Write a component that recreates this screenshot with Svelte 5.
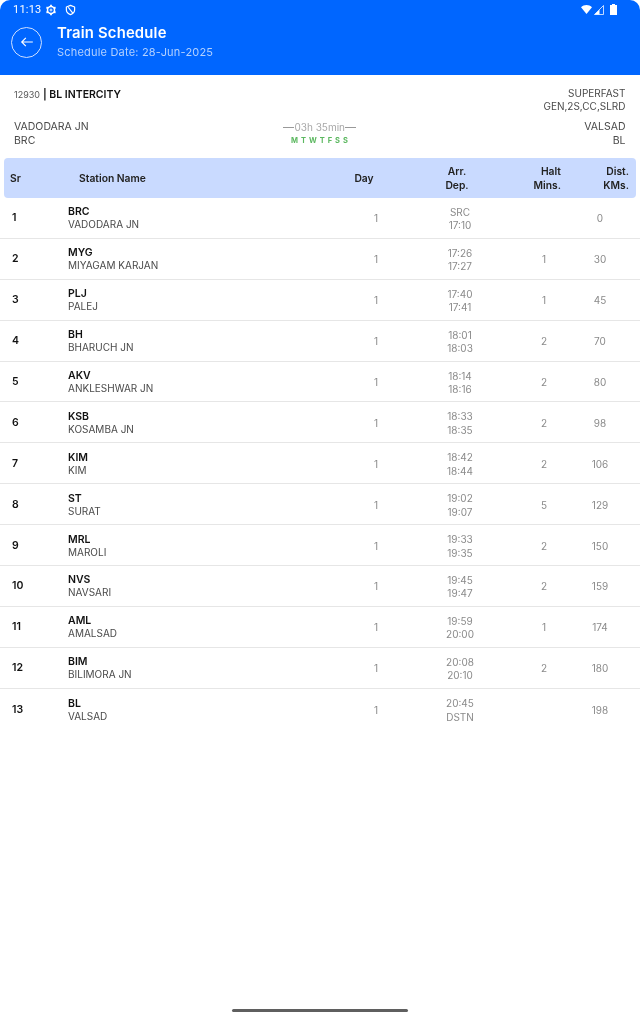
<script>
  const stations = [
    ['BRC', 'VADODARA JN', 'SRC', '17:10', '', '0'],
    ['MYG', 'MIYAGAM KARJAN', '17:26', '17:27', '1', '30'],
    ['PLJ', 'PALEJ', '17:40', '17:41', '1', '45'],
    ['BH', 'BHARUCH JN', '18:01', '18:03', '2', '70'],
    ['AKV', 'ANKLESHWAR JN', '18:14', '18:16', '2', '80'],
    ['KSB', 'KOSAMBA JN', '18:33', '18:35', '2', '98'],
    ['KIM', 'KIM', '18:42', '18:44', '2', '106'],
    ['ST', 'SURAT', '19:02', '19:07', '5', '129'],
    ['MRL', 'MAROLI', '19:33', '19:35', '2', '150'],
    ['NVS', 'NAVSARI', '19:45', '19:47', '2', '159'],
    ['AML', 'AMALSAD', '19:59', '20:00', '1', '174'],
    ['BIM', 'BILIMORA JN', '20:08', '20:10', '2', '180'],
    ['BL', 'VALSAD', '20:45', 'DSTN', '', '198']
  ];
</script>

<div class="screen">
  <header class="appbar">
    <div class="status">
      <div class="status-left">
        <span class="clock">11:13</span>
        <svg class="gear" width="12" height="12" viewBox="0 0 24 24" fill="none" stroke="#fff">
          <circle cx="12" cy="12" r="7" stroke-width="3" />
          <path d="M12 1.500v4M12 18.500v4M2.900 6.700l3.500 2M17.600 15.300l3.500 2M2.900 17.300l3.500-2M17.600 8.700l3.500-2" stroke-width="3.600" />
          <circle cx="12" cy="12" r="2" stroke-width="1.800" />
        </svg>
        <svg class="shield" width="11" height="12" viewBox="0 0 24 24" fill="none" stroke="#fff" stroke-width="2.600">
          <path d="M12 2l9 3.500v6c0 5-3.600 8.800-9 10.500-5.400-1.700-9-5.500-9-10.500v-6z" stroke-linejoin="round" />
          <path d="M7 6l10 13" />
        </svg>
      </div>
      <div class="status-right">
        <svg width="11" height="9" viewBox="0 0 22 18"><path d="M0 4.500C6-1.500 16-1.500 22 4.500L11 18z" fill="#fff" /></svg>
        <svg width="10" height="10" viewBox="0 0 20 20">
          <path d="M19 1v18H1z" fill="none" stroke="#fff" stroke-width="1.500" />
          <path d="M11 9.500V19H1z" fill="#fff" />
        </svg>
        <svg class="battery" width="7" height="11" viewBox="0 0 14 22"><path d="M4 2V0h6v2h4v20H0V2z" fill="#fff" /></svg>
      </div>
    </div>
    <div class="titlebar">
      <button class="back" aria-label="Back">
        <svg width="14" height="14" viewBox="0 0 24 24" fill="none" stroke="#fff" stroke-width="2">
          <path d="M22 12H3M10 5l-7 7 7 7" />
        </svg>
      </button>
      <div>
        <div class="title">Train Schedule</div>
        <div class="subtitle">Schedule Date: 28-Jun-2025</div>
      </div>
    </div>
  </header>

  <section class="train">
    <div class="train-top">
      <div class="train-name"><span class="number">12930</span> <b>| BL INTERCITY</b></div>
      <div class="train-type">SUPERFAST<br />GEN,2S,CC,SLRD</div>
    </div>
    <div class="train-route">
      <div>VADODARA JN<br />BRC</div>
      <div class="journey">
        <div class="duration"><i></i>03h 35min<i></i></div>
        <div class="days">M T W T F S S</div>
      </div>
      <div class="end">VALSAD<br />BL</div>
    </div>
  </section>

  <div class="table-head">
    <div class="h-sr">Sr</div>
    <div class="h-name">Station Name</div>
    <div class="h-day">Day</div>
    <div class="h-time">Arr.<br />Dep.</div>
    <div class="h-halt">Halt<br />Mins.</div>
    <div class="h-dist">Dist.<br />KMs.</div>
  </div>

  <div class="rows">
    {#each stations as s, i}
      <div class="row">
        <div class="sr">{i + 1}</div>
        <div class="name"><b>{s[0]}</b>{s[1]}</div>
        <div class="cell">1</div>
        <div class="cell time">{s[2]}<br />{s[3]}</div>
        <div class="cell">{s[4]}</div>
        <div class="cell">{s[5]}</div>
      </div>
    {/each}
  </div>

  <div class="gesture"></div>
</div>

<style>
  :global(body) {
    margin: 0;
    background: #fff;
  }

  .screen {
    position: relative;
    height: 1024px;
    overflow: hidden;
    font-family: Inter, "Liberation Sans", sans-serif;
    color: #4a4a4a;
    background: #fff;
  }

  /* text in the shot is grayscale antialiased, separate layers give that */
  .appbar, .train, .table-head, .rows {
    will-change: transform;
  }

  .appbar {
    height: 75px;
    box-sizing: border-box;
    background: #0066ff;
    color: #fff;
    border-radius: 10px 10px 0 0;
  }

  .status {
    display: flex;
    justify-content: space-between;
    align-items: center;
    height: 19px;
    padding: 0 23px 0 13px;
  }

  .status-left, .status-right {
    display: flex;
    align-items: center;
  }

  .status-right { gap: 2px; }
  .gear { margin-left: 4px; }
  .shield { margin-left: 8px; }
  .battery { margin-left: 4px; }

  .clock {
    font-family: Roboto, sans-serif;
    font-size: 11px;
    letter-spacing: 0.2px;
  }

  .titlebar {
    display: flex;
    align-items: center;
    gap: 15px;
    padding: 4px 0 0 11px;
  }

  .back {
    width: 31px;
    height: 31px;
    padding: 0;
    display: flex;
    align-items: center;
    justify-content: center;
    border: 1px solid #cfe0ff;
    border-radius: 50%;
    background: none;
  }

  .title {
    font-size: 14.8px;
    font-weight: 600;
    line-height: 20px;
    letter-spacing: 0.2px;
  }

  .subtitle {
    font-size: 11px;
    line-height: 18px;
    color: #b3d1ff;
    letter-spacing: 0.2px;
  }

  .train {
    padding: 12px 14.5px 0 14px;
    height: 83.4px;
    box-sizing: border-box;
    font-size: 10.5px;
    line-height: 13px;
  }

  .train-top {
    display: flex;
    justify-content: space-between;
    align-items: flex-start;
    height: 33px;
  }

  .train-name { padding-top: 1px; color: #111; }
  .train-name b { font-weight: 600; }
  .number { font-size: 9px; color: #555; }

  .train-type {
    font-size: 10px;
    text-align: right;
  }

  .end { text-align: right; }

  .train-route {
    display: grid;
    grid-template-columns: 1fr 1fr 1fr;
    line-height: 14px;
  }

  .journey { text-align: center; }

  .duration {
    display: flex;
    align-items: center;
    justify-content: center;
    font-size: 10px;
    color: #a8a8a8;
  }

  .duration i {
    width: 11px;
    height: 1px;
    background: #999;
  }

  .days {
    font-size: 7.5px;
    font-weight: 700;
    color: #5cb860;
    letter-spacing: 0.6px;
  }

  .table-head {
    display: grid;
    grid-template-columns: 75px 261px 48px 138px 35px 75px;
    align-items: center;
    height: 39.6px;
    box-sizing: border-box;
    padding-top: 1.5px;
    margin: 0 4px;
    background: #c9daff;
    border-radius: 4px;
    color: #222;
    font-size: 10.3px;
    font-weight: 600;
    line-height: 13.5px;
  }

  .h-sr { padding-left: 6px; }
  .h-day, .h-time { text-align: center; }
  .h-halt, .h-dist { text-align: right; white-space: nowrap; }
  .h-dist { padding-right: 7px; }

  .row {
    display: grid;
    grid-template-columns: 68px 280px 56px 112px 56px 56px;
    align-items: center;
    height: 40.9px;
    box-sizing: border-box;
    padding-top: 1px;
    border-bottom: 1px solid #e6e6e6;
    font-size: 10px;
    line-height: 12px;
  }

  .row:last-child { border-bottom: none; }

  .sr {
    padding-left: 12px;
    font-size: 10.5px;
    font-weight: 600;
    color: #111;
  }

  .name b {
    display: block;
    font-size: 10.5px;
    font-weight: 600;
    color: #111;
  }

  .cell {
    text-align: center;
    color: #8a8a8a;
  }

  .time {
    padding-top: 2px;
    line-height: 13.5px;
  }

  .gesture {
    position: absolute;
    left: 232px;
    top: 1009px;
    width: 176px;
    height: 3px;
    border-radius: 2px;
    background: #5f5f5f;
  }
</style>
